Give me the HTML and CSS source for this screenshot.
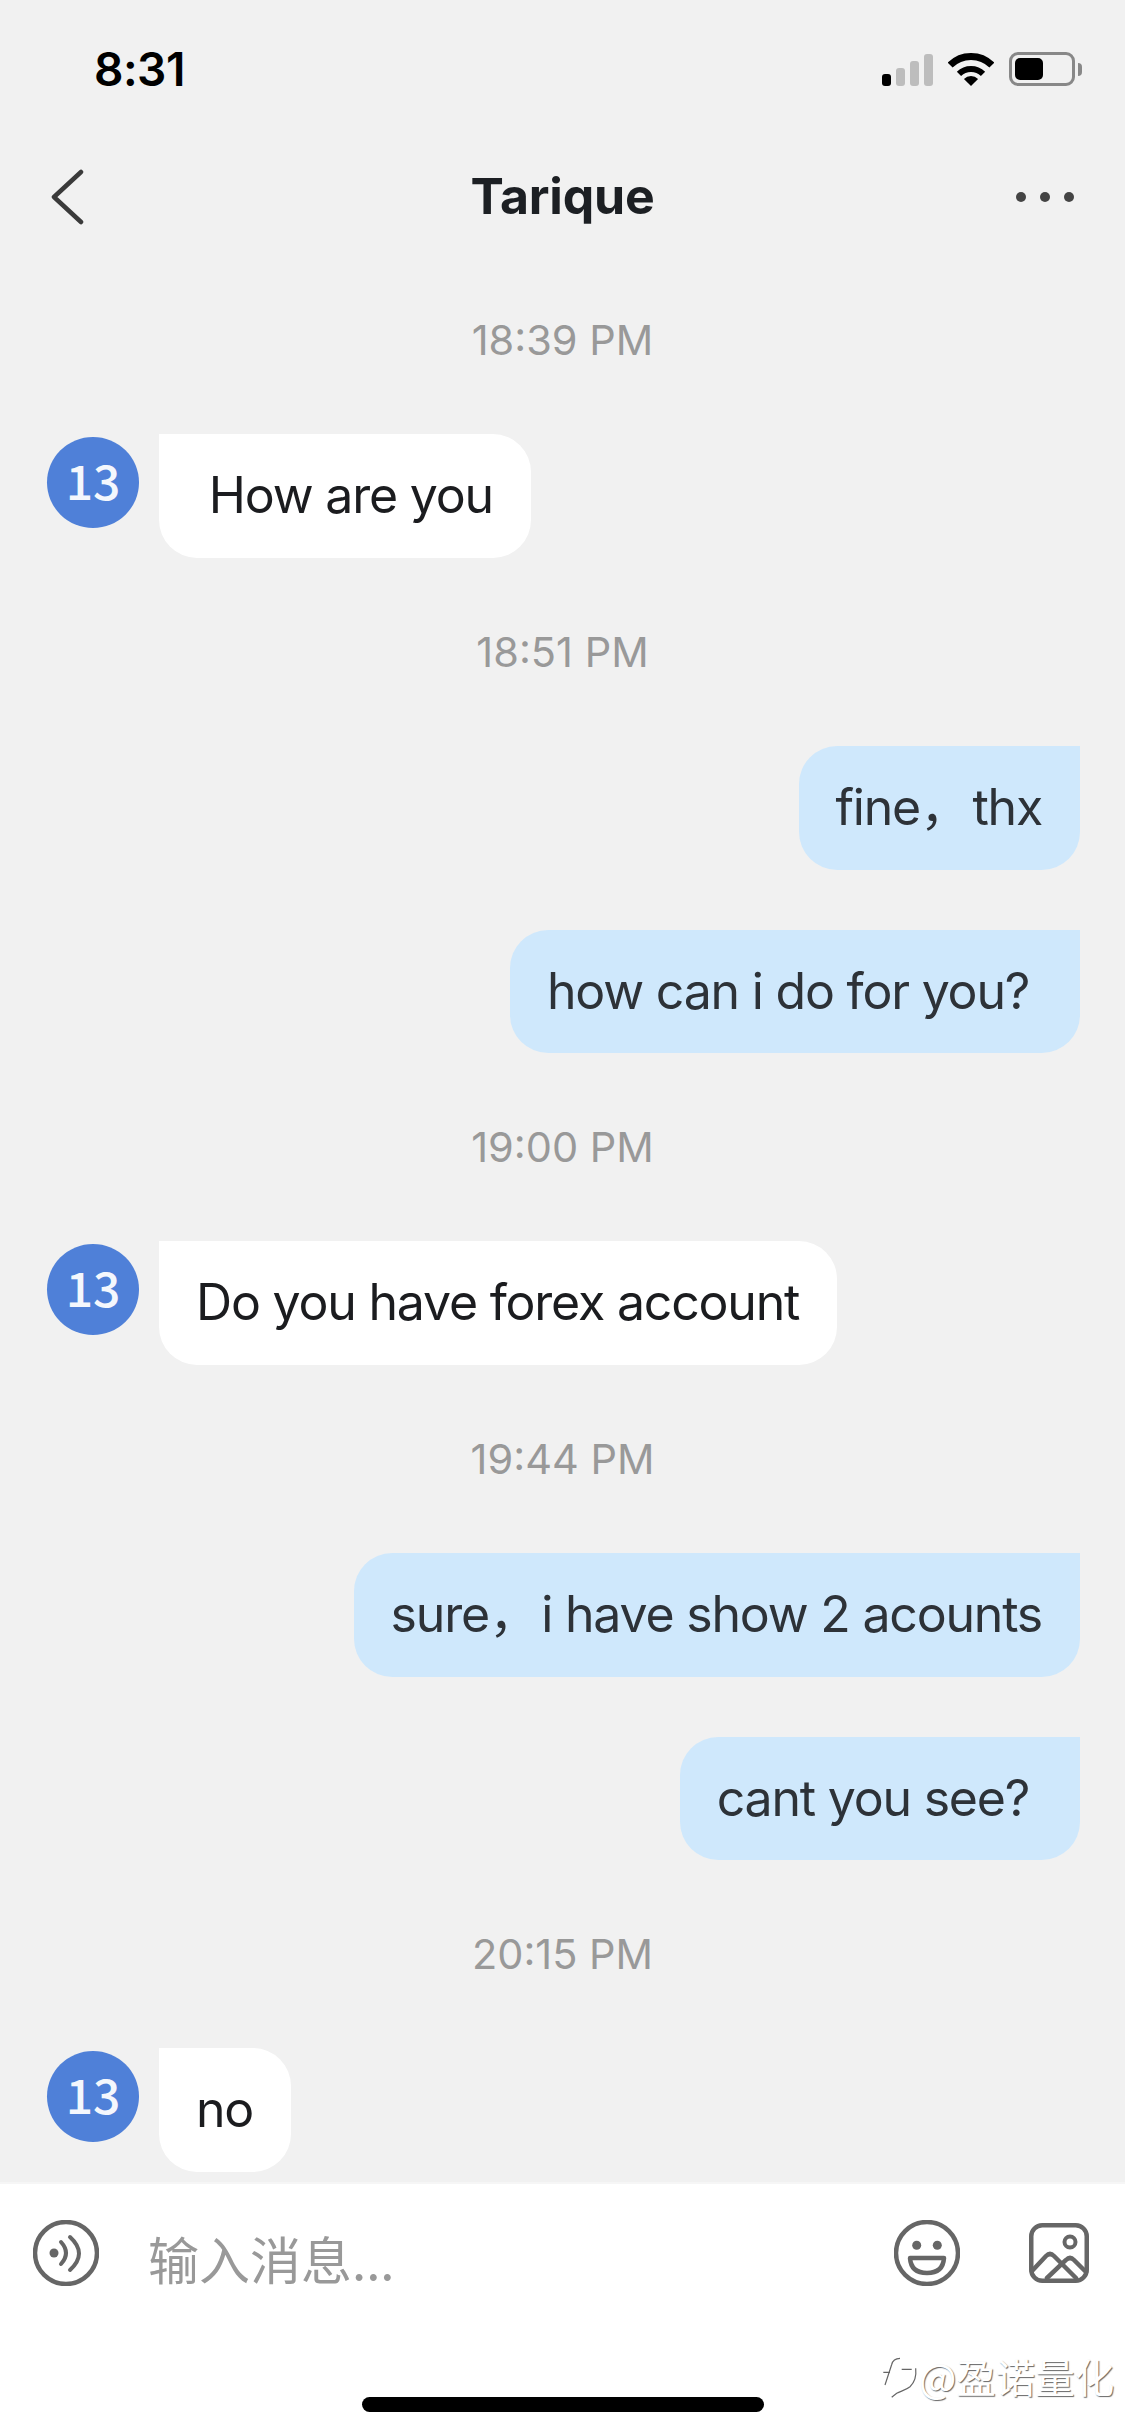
FILE: index.html
```html
<!DOCTYPE html>
<html lang="en">

<head>
  <meta charset="UTF-8" />
  <meta name="viewport" content="width=device-width, initial-scale=1.0" />
  <title>Tarique</title>
  <link rel="stylesheet" href="styles.css">
</head>

<body>
  <div class="page">
    <div class="status-bar">
      <span class="clock">8:31</span>
      <div class="status-icons">
        <div class="signal">
          <span class="bar bar-on"></span>
          <span class="bar bar-2"></span>
          <span class="bar bar-3"></span>
          <span class="bar bar-4"></span>
        </div>
        <svg class="wifi" viewBox="0 0 46 33" width="46" height="33">
          <path d="M2.14 12.14A29.5 29.5 0 0 1 43.86 12.14" fill="none" stroke="#000" stroke-width="7" />
          <path d="M10.98 20.98A17 17 0 0 1 35.02 20.98" fill="none" stroke="#000" stroke-width="6" />
          <path d="M23 33L15.93 25.93A10 10 0 0 1 30.07 25.93Z" fill="#000" />
        </svg>
        <div class="battery">
          <div class="battery-body"><span class="battery-level"></span></div>
          <span class="battery-nib"></span>
        </div>
      </div>
    </div>

    <div class="nav">
      <svg class="back" viewBox="0 0 34 56" width="34" height="56">
        <path d="M30 3L3 28L30 53" fill="none" stroke="#3a3a3a" stroke-width="4.5" stroke-linecap="round" stroke-linejoin="round" />
      </svg>
      <h1 class="title">Tarique</h1>
      <div class="more">
        <span></span>
        <span></span>
        <span></span>
      </div>
    </div>

    <div class="messages">
      <div class="time">18:39 PM</div>
      <div class="row">
        <div class="avatar">13</div>
        <div class="bubble bubble-in"> How are you</div>
      </div>

      <div class="time">18:51 PM</div>
      <div class="row row-out">
        <div class="bubble bubble-out">fine<span class="comma">，</span>thx</div>
      </div>
      <div class="row row-out">
        <div class="bubble bubble-out">how can i do for you? </div>
      </div>

      <div class="time">19:00 PM</div>
      <div class="row">
        <div class="avatar">13</div>
        <div class="bubble bubble-in">Do you have forex account</div>
      </div>

      <div class="time">19:44 PM</div>
      <div class="row row-out">
        <div class="bubble bubble-out">sure<span class="comma">，</span>i have show 2 acounts</div>
      </div>
      <div class="row row-out">
        <div class="bubble bubble-out">cant you see? </div>
      </div>

      <div class="time">20:15 PM</div>
      <div class="row">
        <div class="avatar">13</div>
        <div class="bubble bubble-in">no</div>
      </div>
    </div>

    <div class="composer">
      <div class="composer-row">
        <svg class="icon" viewBox="0 0 66 66" width="66" height="66">
          <circle cx="33" cy="33" r="31" fill="none" stroke="#666" stroke-width="4.5" />
          <circle cx="21" cy="33" r="4.5" fill="#666" />
          <path d="M28 22Q38 33 28 44" fill="none" stroke="#666" stroke-width="4" stroke-linecap="round" />
          <path d="M37 17Q55 33.5 37 50" fill="none" stroke="#666" stroke-width="4" stroke-linecap="round" />
        </svg>
        <div class="placeholder">输入消息...</div>
        <svg class="icon" viewBox="0 0 66 66" width="66" height="66">
          <circle cx="33" cy="33" r="31" fill="none" stroke="#666" stroke-width="4.5" />
          <circle cx="22.7" cy="25.3" r="4.5" fill="#666" />
          <circle cx="43.3" cy="25.3" r="4.5" fill="#666" />
          <path d="M16 38H50Q49 53 33 53Q17 53 16 38Z" fill="none" stroke="#666" stroke-width="4.5" stroke-linejoin="round" />
        </svg>
        <svg class="icon icon-picture" viewBox="0 0 60 60" width="60" height="60">
          <rect x="2.25" y="2.25" width="55.5" height="55.5" rx="11" fill="none" stroke="#666" stroke-width="4.5" />
          <circle cx="41" cy="19" r="5.5" fill="none" stroke="#666" stroke-width="4" />
          <path d="M3 48L17 33Q21 29 25 33L47 55" fill="none" stroke="#666" stroke-width="4.5" stroke-linecap="round" />
          <path d="M18 55L37 37Q41 33 45 37L57 49" fill="none" stroke="#666" stroke-width="4.5" stroke-linecap="round" />
        </svg>
      </div>
      <div class="home-bar"></div>

      <!-- watermark sits on top of the screenshot -->
      <div class="watermark">
        <svg class="watermark-logo" viewBox="0 0 44 48" width="44" height="48">
          <path d="M19 6.3C14 6.5 11.5 9 10.7 12.5L4 33M2.3 20.3H9M20.7 17.3H30.7M34.7 16.3C35.5 24 33 31 29 34.7C25 38 20 39 15.7 41.3L10.7 45.3" fill="none" stroke="#666" stroke-width="1.2" />
        </svg>
        <span>@盈诺量化</span>
      </div>
    </div>
  </div>
</body>

</html>
```

FILE: styles.css
```css
* {
  box-sizing: border-box;
}

html,
body {
  margin: 0;
  padding: 0;
}

body {
  font-family: Inter, 'Noto Sans CJK SC', sans-serif;
}

.page {
  width: 1125px;
  height: 2436px;
  display: flex;
  flex-direction: column;
  overflow: hidden;
  background-color: #f1f1f1;
}

/* Status bar */
.status-bar {
  height: 120px;
  flex-shrink: 0;
  display: flex;
  justify-content: space-between;
  align-items: flex-start;
  padding: 52px 43px 0 94px;
}

.clock {
  font-size: 46px;
  font-weight: 600;
  line-height: 34px;
  letter-spacing: -0.5px;
  color: #000;
}

.status-icons {
  display: flex;
  align-items: flex-end;
  gap: 15px;
  height: 34px;
}

.signal {
  display: flex;
  align-items: flex-end;
  gap: 5px;
  height: 33px;
}

.bar {
  width: 9px;
  height: 12px;
  border-radius: 3px;
  background-color: #bdbdbd;
}

.bar-on {
  background-color: #000;
}

.bar-2 {
  height: 18px;
}

.bar-3 {
  height: 25px;
}

.bar-4 {
  height: 32px;
}

.wifi {
  display: block;
}

.battery {
  display: flex;
  align-items: center;
  gap: 3px;
}

.battery-body {
  width: 66px;
  height: 34px;
  padding: 3px;
  border: 3px solid #888;
  border-radius: 9px;
}

.battery-level {
  display: block;
  width: 28px;
  height: 22px;
  border-radius: 5px;
  background-color: #000;
}

.battery-nib {
  width: 4px;
  height: 13px;
  border-radius: 0 4px 4px 0;
  background-color: #888;
}

/* Nav */
.nav {
  height: 154px;
  flex-shrink: 0;
  display: grid;
  grid-template-columns: 1fr auto 1fr;
  align-items: center;
  padding: 0 51px;
}

.back {
  display: block;
}

.title {
  margin: 0 0 2px;
  font-size: 50px;
  font-weight: 700;
  line-height: 58px;
  letter-spacing: -0.2px;
  color: #1c1f23;
}

.more {
  display: flex;
  justify-content: flex-end;
  gap: 14px;
}

.more span {
  width: 10px;
  height: 10px;
  border-radius: 50%;
  background-color: #444;
}

/* Messages */
.messages {
  flex: 1;
  display: flex;
  flex-direction: column;
  padding-top: 32.3px;
  overflow: hidden;
}

.time {
  margin: 8.7px 0 69.5px;
  font-size: 41.5px;
  line-height: 50px;
  text-align: center;
  color: #999;
}

.row {
  display: flex;
  gap: 20px;
  padding: 0 45px 0 47px;
  margin-bottom: 60px;
}

.row-out {
  justify-content: flex-end;
}

.avatar {
  width: 92px;
  height: 91px;
  margin-top: 3px;
  flex-shrink: 0;
  border-radius: 50%;
  background-color: #4f80d8;
  font-family: 'Noto Sans CJK SC', sans-serif;
  font-size: 48px;
  font-weight: 500;
  line-height: 84px;
  text-align: center;
  color: #f4f7fd;
}

.bubble {
  height: 123.5px;
  padding: 0 38px 0 37px;
  border-radius: 38px;
  font-size: 50px;
  line-height: 122px;
  letter-spacing: -1.2px;
  white-space: pre;
}

.comma {
  margin-right: 3.5px;
}

.bubble-in {
  background-color: #fff;
  border-top-left-radius: 0;
  color: #1b1c1f;
}

.bubble-out {
  background-color: #cfe8fc;
  border-top-right-radius: 0;
  color: #2d3238;
}

/* Composer */
.composer {
  position: relative;
  height: 254px;
  flex-shrink: 0;
  background-color: #fff;
  border-top: 2px solid #f6f6f6;
}

.composer-row {
  display: flex;
  align-items: center;
  gap: 69px;
  height: 102px;
  padding: 36px 36px 0 33px;
}

.icon {
  display: block;
  flex-shrink: 0;
}

.placeholder {
  flex: 1;
  height: 66px;
  margin-left: -20px;
  padding-top: 5px;
  font-family: 'Noto Sans CJK SC', sans-serif;
  font-size: 51px;
  line-height: 66px;
  color: #999;
}

.home-bar {
  width: 402px;
  height: 15px;
  margin: 111px auto 0;
  border-radius: 8px;
  background-color: #000;
}

.watermark {
  position: absolute;
  top: 168px;
  left: 881px;
  display: flex;
  align-items: center;
  font-family: 'Noto Sans CJK SC', sans-serif;
  font-size: 39.5px;
  line-height: 48px;
  color: #fff;
  text-shadow: 1px 1px 1px #666;
  white-space: nowrap;
}

.watermark-logo {
  display: block;
  flex-shrink: 0;
  margin-right: -6px;
}
```
